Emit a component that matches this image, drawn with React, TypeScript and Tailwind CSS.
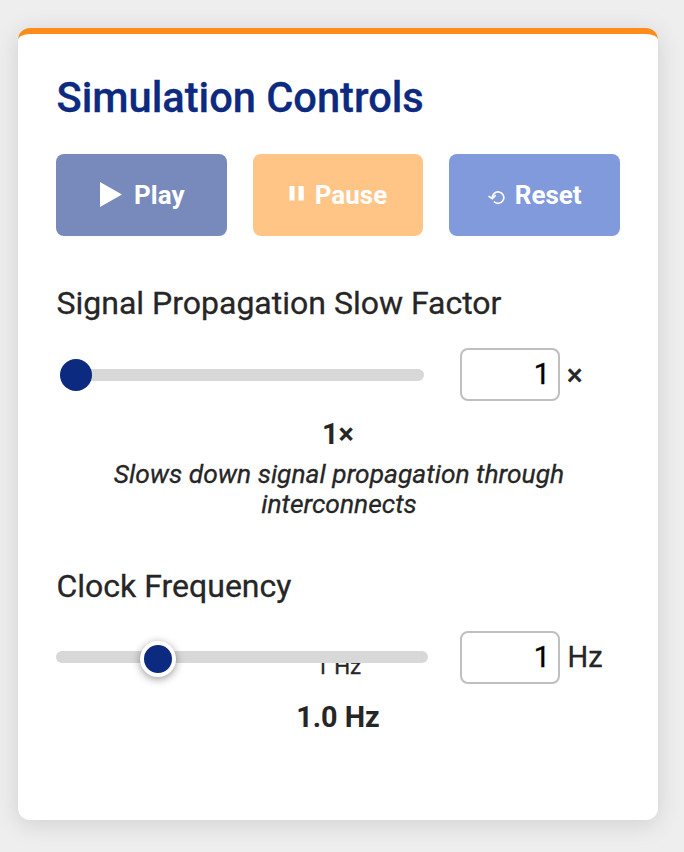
import type { ReactNode } from "react";

function ControlButton({ color, icon, label }: { color: string; icon: ReactNode; label: string }) {
  return (
    <button
      type="button"
      className={`flex h-[82px] min-w-0 flex-1 items-center justify-center rounded-lg text-[26px] leading-[30px] font-bold text-white ${color}`}
    >
      {icon}
      <span>{label}</span>
    </button>
  );
}

function NumberBox({ value, unit, unitClass }: { value: string; unit: string; unitClass: string }) {
  return (
    <div className="flex items-center">
      <div className="h-[53px] w-[100px] rounded-lg border-2 border-[#bfbfbf] bg-white pr-2 text-right text-[29px] leading-[48px] text-black [-webkit-text-stroke:0.4px]">
        {value}
      </div>
      <span className={`text-[29px] ${unitClass}`}>{unit}</span>
    </div>
  );
}

export default function App() {
  return (
    <main className="h-[852px] w-[684px] overflow-hidden bg-[#eeeeee] pt-7 pl-[18px] font-['Roboto',sans-serif] text-[#262626]">
      <section className="h-[792px] w-[640px] rounded-xl border-t-[6px] border-[#ff8c1a] bg-white px-[38px] pt-[39px] shadow-[0_4px_24px_rgba(0,0,0,0.13)]">
        <h1 className="h-[81px] pl-[0.5px] text-[41.6px] leading-[50px] font-medium whitespace-nowrap text-[#0c2a80] [-webkit-text-stroke:0.3px]">
          Simulation Controls
        </h1>

        <div className="flex gap-[26px]">
          <ControlButton
            color="bg-[#788abc]"
            label="Play"
            icon={
              <svg className="mr-3 ml-[2px] h-[26px] w-[22px]" viewBox="0 0 22 26" fill="currentColor">
                <path d="M0 0L22 12.5L0 25Z" />
              </svg>
            }
          />
          <ControlButton
            color="bg-[#ffc587]"
            label="Pause"
            icon={
              <svg className="mr-[11px] h-[26px] w-[15px]" viewBox="0 0 15 26" fill="currentColor">
                <path d="M0.5 4h5v14.5h-5zM9.5 4h5.2v14.5h-5.2z" />
              </svg>
            }
          />
          <ControlButton
            color="bg-[#809adb]"
            label="Reset"
            icon={
              <svg
                className="mr-[10px] h-[26px] w-[17px]"
                viewBox="0 0 17 26"
                fill="none"
                stroke="currentColor"
                strokeWidth="1.7"
              >
                <path d="M4.4 16.2A5.7 5.7 0 1 1 5.9 19.5" />
                <path d="M0.5 14.1L4.3 16.6L7.7 13.2" />
              </svg>
            }
          />
        </div>

        <div className="mt-[47px]">
          <h2 className="pl-[0.5px] text-[32px] leading-10 whitespace-nowrap [-webkit-text-stroke:0.3px]">
            Signal Propagation Slow Factor
          </h2>
          <div className="mt-[25px] flex h-[53px] items-center">
            <div className="ml-1 flex h-8 w-[364px] items-center rounded-full">
              <div className="relative h-3 w-full rounded-full bg-[#d8d8d8]">
                <div className="absolute -top-[10px] left-0 size-8 rounded-full bg-[#0c2a80]" />
              </div>
            </div>
            <div className="ml-9">
              <NumberBox value="1" unit="×" unitClass="ml-[7px] leading-[50px] [-webkit-text-stroke:0.7px]" />
            </div>
          </div>
          <p className="mt-4 text-center text-[28.8px] leading-[34px] font-bold">1×</p>
          <p className="mt-2 pl-[2px] text-center text-[26.4px] leading-[30px] whitespace-nowrap italic [-webkit-text-stroke:0.3px]">
            Slows down signal propagation through
            <br />
            interconnects
          </p>
        </div>

        <div className="mt-[47px]">
          <h2 className="pl-[0.5px] text-[32px] leading-10 [-webkit-text-stroke:0.3px]">Clock Frequency</h2>
          <div className="mt-[25px] flex h-[53px] items-center">
            <div className="relative mb-px h-3 w-[372px]">
              <span className="absolute top-0 left-[260px] text-[22.4px] leading-[30px] whitespace-nowrap [-webkit-text-stroke:0.3px]">
                1 Hz
              </span>
              <div className="absolute inset-0 rounded-full bg-[#d8d8d8]" />
              <div className="absolute -top-[10px] left-[84px] size-9 rounded-full border-4 border-white bg-[#0c2a80] shadow-[0_2px_8px_rgba(0,0,0,0.4)]" />
            </div>
            <div className="ml-8">
              <NumberBox value="1" unit="Hz" unitClass="ml-[7.5px] pb-[2px] leading-[50px] [-webkit-text-stroke:0.3px]" />
            </div>
          </div>
          <p className="mt-4 text-center text-[28.8px] leading-[34px] font-bold">1.0 Hz</p>
        </div>
      </section>
    </main>
  );
}
